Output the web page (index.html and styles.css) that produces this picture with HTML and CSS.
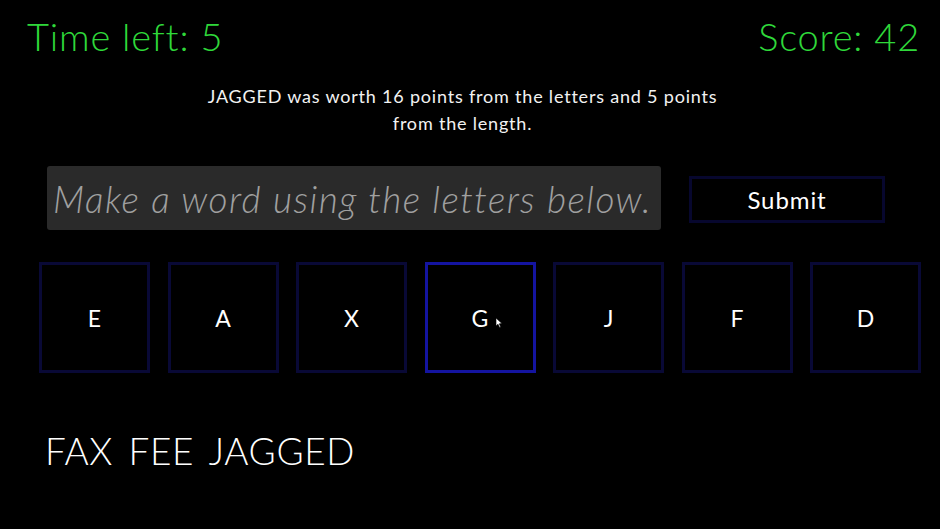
FILE: index.html
```html
<!DOCTYPE html>
<html>
<head>
<meta charset="utf-8">
<link rel="stylesheet" href="styles.css">
</head>
<body>
<div class="app">
  <header class="top">
    <div class="stat">Time left: 5</div>
    <div class="stat">Score: 42</div>
  </header>
  <p class="message">JAGGED was worth 16 points from the letters and 5 points<br>from the length.</p>
  <div class="entry">
    <input class="word-input" type="text" placeholder="Make a word using the letters below.">
    <button class="submit">Submit</button>
  </div>
  <div class="tiles">
    <div class="tile">E</div>
    <div class="tile">A</div>
    <div class="tile">X</div>
    <div class="tile active">G<svg class="cursor" width="7" height="10" viewBox="0 0 7 10"><path d="M0 0 L0 8 L2 6.2 L3.6 9.5 L4.8 9 L3.3 5.8 L6 5.6 Z" fill="#fff" stroke="#000" stroke-width="0.6"/></svg></div>
    <div class="tile">J</div>
    <div class="tile">F</div>
    <div class="tile">D</div>
  </div>
  <div class="words">FAX FEE JAGGED</div>
</div>
</body>
</html>
```

FILE: styles.css
```css
html, body {
  margin: 0;
  padding: 0;
  background: #000;
}
body {
  font-family: "Lato", "Noto Sans", sans-serif;
  font-weight: 400;
  color: #f2f2f2;
  width: 940px;
  height: 529px;
  overflow: hidden;
}
.app {
  display: flex;
  flex-direction: column;
}
.top {
  display: flex;
  justify-content: space-between;
  padding: 12px 20px 0 27px;
  height: 48px;
}
.stat {
  color: #2fd83a;
  font-size: 38px;
  line-height: 48px;
  font-weight: 300;
  letter-spacing: 0.8px;
}
.message {
  margin: 23px 0 0;
  padding-right: 15px;
  text-align: center;
  font-size: 18px;
  line-height: 27px;
  letter-spacing: 0.8px;
}
.entry {
  display: flex;
  align-items: center;
  margin: 29px 0 0 47px;
  gap: 28px;
}
.word-input {
  box-sizing: border-box;
  width: 614px;
  height: 64px;
  background: #2a2a2a;
  border: none;
  border-radius: 3px;
  padding: 0 6px;
  font-family: "Lato", "Noto Sans", sans-serif;
  font-weight: 300;
  font-style: italic;
  font-size: 37px;
  letter-spacing: 1.45px;
  color: #ddd;
  outline: none;
}
.word-input::placeholder {
  color: #a0a0a0;
}
.submit {
  box-sizing: border-box;
  width: 196px;
  height: 47px;
  margin-top: 2px;
  background: #000;
  border: 3px solid #07072e;
  color: #fff;
  font-family: "Lato", "Noto Sans", sans-serif;
  font-weight: 400;
  font-size: 24px;
  letter-spacing: 0.9px;
  padding: 0;
}
.tiles {
  display: flex;
  gap: 17.5px;
  margin: 32px 0 0 39px;
}
.tile {
  position: relative;
  box-sizing: border-box;
  width: 111px;
  height: 111px;
  border: 3px solid #090936;
  display: flex;
  align-items: center;
  justify-content: center;
  font-size: 23px;
  font-weight: 400;
  color: #fff;
}
.tile.active {
  border-color: #1414a0;
}
.cursor {
  position: absolute;
  left: 68px;
  top: 53px;
}
.words {
  margin: 55px 0 0 45px;
  font-size: 37px;
  letter-spacing: 0.6px;
  word-spacing: 5px;
  color: #fff;
  font-weight: 300;
}
```
